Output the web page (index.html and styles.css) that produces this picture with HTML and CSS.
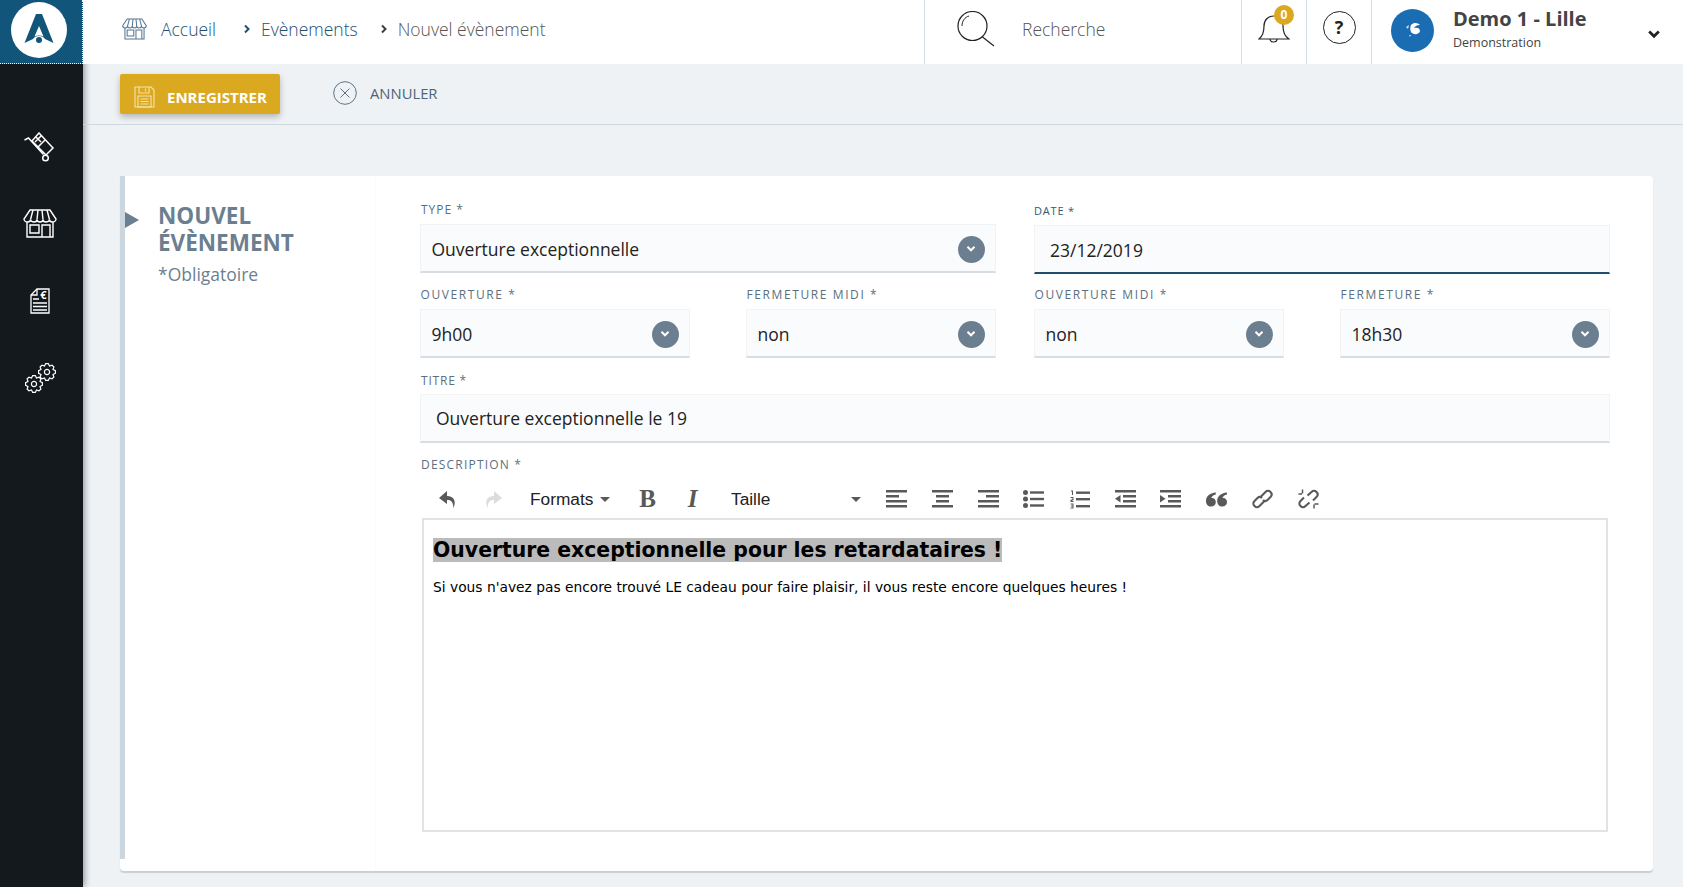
FILE: index.html
```html
<!DOCTYPE html>
<html lang="fr">
<head>
    <meta charset="UTF-8">
    <title>Nouvel évènement</title>
    <link rel="stylesheet" href="styles.css">
</head>
<body>
    <svg class="defs" width="0" height="0">
        <symbol id="store" viewBox="0 0 34 29">
            <path d="M7 1H27L33 10C33 12 31 13 29.500 13C28 13 26.500 12 26.500 10.500C26.500 12 24.500 13 23 13C21.500 13 20 12 20 10.500C20 12 18.500 13 17 13C15.500 13 14 12 14 10.500C14 12 12.500 13 11 13C9.500 13 7.500 12 7.500 10.500C7.500 12 6 13 4.500 13C3 13 1 12 1 10Z" fill="none" stroke="currentColor" stroke-width="1.400"/>
            <path d="M7.500 10.500L10 1M14 10.500L15 1M20 10.500L19 1M26.500 10.500L24 1" fill="none" stroke="currentColor" stroke-width="1.400"/>
            <path d="M4 13V28H30V13M7 16H16V24H7ZM19 28V16H27V28" fill="none" stroke="currentColor" stroke-width="1.400"/>
        </symbol>
        <symbol id="gear" viewBox="-9 -9 18 18">
            <polygon points="8.4,1.33 6,2.49 6.88,5 5,6.88 2.49,6 1.33,8.4 -1.33,8.4 -2.49,6 -5,6.88 -6.88,5 -6,2.49 -8.4,1.33 -8.4,-1.33 -6,-2.49 -6.88,-5 -5,-6.88 -2.49,-6 -1.33,-8.4 1.33,-8.4 2.49,-6 5,-6.88 6.88,-5 6,-2.49 8.4,-1.33" fill="none" stroke="currentColor" stroke-width="1.200"/>
            <circle r="2.600" fill="none" stroke="currentColor" stroke-width="1.200"/>
        </symbol>
        <symbol id="chevron" viewBox="0 0 10 8">
            <path d="M1.500 1.800L5 5.300L8.500 1.800" fill="none" stroke="currentColor" stroke-width="2"/>
        </symbol>
    </svg>

    <div class="app">
        <aside class="sidebar">
            <div class="logo">
                <svg width="56" height="56" viewBox="0 0 56 56">
                    <circle cx="28" cy="28" r="28" fill="#fff"/>
                    <path d="M25 12H31L42.500 41L34 37C32 33 24 33 22 37L13.500 41Z" fill="#11557a"/>
                    <path d="M28 24L32.500 34.500C30 33 26 33 23.500 34.500Z" fill="#fff"/>
                    <circle cx="28" cy="38" r="3" fill="#11557a"/>
                </svg>
            </div>
            <nav class="side-nav">
                <a class="side-item">
                    <svg width="32" height="30" viewBox="0 0 32 30" fill="none" stroke="#fff" stroke-width="1.500">
                        <path d="M0.500 8L4.500 6L19.500 22.500"/>
                        <path d="M15 1L29 16L22 23L8 9Z"/>
                        <path d="M12 5L17 10M17.500 3.500L11 10M21 8L14 15"/>
                        <circle cx="21.500" cy="26" r="2.800"/>
                    </svg>
                </a>
                <a class="side-item">
                    <svg class="store-side" width="34" height="29"><use href="#store"/></svg>
                </a>
                <a class="side-item">
                    <svg width="20" height="26" viewBox="0 0 20 26" fill="none" stroke="#fff" stroke-width="1.300">
                        <path d="M7 1H19V25H1V7Z"/>
                        <path d="M7 1V7H1"/>
                        <path d="M3 11H9M3 15H17M3 18.500H17M3 22H17"/>
                        <text class="euro" x="13.500" y="11" text-anchor="middle">€</text>
                    </svg>
                </a>
                <a class="side-item">
                    <span class="gears">
                        <svg class="gear-top" width="18" height="18"><use href="#gear"/></svg>
                        <svg class="gear-bottom" width="18" height="18"><use href="#gear"/></svg>
                    </span>
                </a>
            </nav>
        </aside>

        <div class="main">
            <header class="topbar">
                <div class="crumbs">
                    <svg class="crumb-store" width="25" height="22"><use href="#store"/></svg>
                    <a class="crumb crumb-home">Accueil</a>
                    <svg class="crumb-sep" width="8" height="10" viewBox="0 0 8 10"><path d="M2 1.500L5.500 5L2 8.500" fill="none" stroke="#24506f" stroke-width="2"/></svg>
                    <a class="crumb">Evènements</a>
                    <svg class="crumb-sep crumb-sep-last" width="8" height="10" viewBox="0 0 8 10"><path d="M2 1.500L5.500 5L2 8.500" fill="none" stroke="#3a3f44" stroke-width="2"/></svg>
                    <span class="crumb crumb-current">Nouvel évènement</span>
                </div>
                <div class="search">
                    <svg width="38" height="36" viewBox="0 0 38 36" fill="none" stroke="#222" stroke-width="1.200">
                        <circle cx="15.500" cy="15" r="14.500"/>
                        <path d="M25.500 26L37 35"/>
                        <path d="M5 15C5 10 8 6 12 5" stroke-width="1"/>
                    </svg>
                    <span class="search-text">Recherche</span>
                </div>
                <div class="top-icon top-bell">
                    <svg width="32" height="30" viewBox="0 0 32 30" fill="none" stroke="#222" stroke-width="1.200">
                        <path d="M1 25C5 22 6 18 6 12C6 6 10 2 16 2C22 2 25 6 25 12C25 18 26 22 31 25Z"/>
                        <path d="M12 25C12 29 19 29 19 25"/>
                    </svg>
                    <span class="badge">0</span>
                </div>
                <div class="top-icon">
                    <span class="help">?</span>
                </div>
                <div class="account">
                    <span class="avatar">
                        <svg width="20" height="20" viewBox="0 0 20 20">
                            <path d="M8 5C11 2 15 3 17 5C14 5 12 6 11 8C14 7 17 8 17 11C16 15 10 15 8 12C7 10 7 7 8 5Z" fill="#fff"/>
                            <path d="M3 7L6 5L5 9ZM6 15L8 15L7 17Z" fill="#cfe0ef"/>
                        </svg>
                    </span>
                    <div class="account-text">
                        <div class="account-name">Demo 1 - Lille</div>
                        <div class="account-sub">Demonstration</div>
                    </div>
                    <svg class="account-chevron" width="14" height="11"><use href="#chevron"/></svg>
                </div>
            </header>

            <div class="actions">
                <button class="btn-save">
                    <svg width="21" height="22" viewBox="0 0 21 22" fill="none" stroke="#f6e4ad" stroke-width="1.100">
                        <path d="M1 1H17L20 4V21H1Z"/>
                        <path d="M5 1V7H15V1M11.500 2.500V5.500"/>
                        <path d="M4 10H17V21H4ZM6.500 13H14.500M6.500 15.500H14.500M6.500 18H14.500"/>
                    </svg>
                    ENREGISTRER
                </button>
                <a class="btn-cancel">
                    <svg width="24" height="24" viewBox="0 0 24 24" fill="none" stroke="#5d7385" stroke-width="1">
                        <circle cx="12" cy="12" r="11.300"/>
                        <path d="M7.500 7.500L16.500 16.500M16.500 7.500L7.500 16.500"/>
                    </svg>
                    ANNULER
                </a>
            </div>

            <section class="card">
                <div class="card-side">
                    <h2>NOUVEL<br>ÉVÈNEMENT</h2>
                    <p>*Obligatoire</p>
                </div>
                <form class="card-form">
                    <div class="form-row">
                        <div class="field">
                            <label>TYPE *</label>
                            <div class="control">Ouverture exceptionnelle<span class="arrow"><svg width="10" height="8"><use href="#chevron"/></svg></span></div>
                        </div>
                        <div class="field field-date">
                            <label>DATE *</label>
                            <div class="control control-text control-active">23/12/2019</div>
                        </div>
                    </div>
                    <div class="form-row form-row-hours">
                        <div class="pair pair-left">
                            <div class="field">
                                <label>OUVERTURE *</label>
                                <div class="control">9h00<span class="arrow"><svg width="10" height="8"><use href="#chevron"/></svg></span></div>
                            </div>
                            <div class="field">
                                <label>FERMETURE MIDI *</label>
                                <div class="control">non<span class="arrow"><svg width="10" height="8"><use href="#chevron"/></svg></span></div>
                            </div>
                        </div>
                        <div class="pair pair-right">
                            <div class="field">
                                <label>OUVERTURE MIDI *</label>
                                <div class="control">non<span class="arrow"><svg width="10" height="8"><use href="#chevron"/></svg></span></div>
                            </div>
                            <div class="field">
                                <label>FERMETURE *</label>
                                <div class="control">18h30<span class="arrow"><svg width="10" height="8"><use href="#chevron"/></svg></span></div>
                            </div>
                        </div>
                    </div>
                    <div class="field field-title">
                        <label>TITRE *</label>
                        <div class="control control-text">Ouverture exceptionnelle le 19</div>
                    </div>
                    <div class="field field-desc">
                        <label>DESCRIPTION *</label>
                        <div class="editor-tools">
                            <span class="tool">
                                <svg width="20" height="20" viewBox="0 0 20 20"><path d="M9 2L1 9L9 15V11C13 11 15 12.500 15.500 19C18.500 12 16 7 9 7Z" fill="#595959"/></svg>
                            </span>
                            <span class="tool">
                                <svg width="20" height="20" viewBox="0 0 20 20"><path d="M11 2L19 9L11 15V11C7 11 5 12.500 4.500 19C1.500 12 4 7 11 7Z" fill="#dcdcdc"/></svg>
                            </span>
                            <span class="tool-menu tool-formats">Formats<i class="caret"></i></span>
                            <span class="tool tool-letter tool-b">B</span>
                            <span class="tool tool-letter tool-i">I</span>
                            <span class="tool-menu tool-size">Taille<i class="caret"></i></span>
                            <span class="tool tool-icon">
                                <svg width="21" height="18" viewBox="0 0 21 18" fill="#595959"><rect width="21" height="2.500"/><rect y="5" width="13" height="2.500"/><rect y="10" width="21" height="2.500"/><rect y="15" width="21" height="2.500"/></svg>
                            </span>
                            <span class="tool tool-icon">
                                <svg width="21" height="18" viewBox="0 0 21 18" fill="#595959"><rect width="21" height="2.500"/><rect x="4" y="5" width="13" height="2.500"/><rect x="4" y="10" width="13" height="2.500"/><rect y="15" width="21" height="2.500"/></svg>
                            </span>
                            <span class="tool tool-icon">
                                <svg width="21" height="18" viewBox="0 0 21 18" fill="#595959"><rect width="21" height="2.500"/><rect x="8" y="5" width="13" height="2.500"/><rect y="10" width="21" height="2.500"/><rect y="15" width="21" height="2.500"/></svg>
                            </span>
                            <span class="tool tool-icon">
                                <svg width="21" height="18" viewBox="0 0 21 18" fill="#595959"><circle cx="2.500" cy="2.500" r="2.500"/><circle cx="2.500" cy="9" r="2.500"/><circle cx="2.500" cy="15.500" r="2.500"/><rect x="7" y="1.300" width="14" height="2.400"/><rect x="7" y="7.800" width="14" height="2.400"/><rect x="7" y="14.300" width="14" height="2.400"/></svg>
                            </span>
                            <span class="tool tool-icon">
                                <svg width="20" height="19" viewBox="0 0 20 19" fill="#595959"><path d="M1 0.500H3V5H2V1.500H1ZM0.500 7H3.500V10L1.500 11H3.500V12H0.500V10L2.500 9V8H0.500ZM0.500 13.500H3.500V18.500H0.500V17.500H2.500V16.500H1V15.500H2.500V14.500H0.500Z"/><rect x="6" y="1.500" width="14" height="2.400"/><rect x="6" y="8" width="14" height="2.400"/><rect x="6" y="15" width="14" height="2.400"/></svg>
                            </span>
                            <span class="tool tool-icon">
                                <svg width="21" height="18" viewBox="0 0 21 18" fill="#595959"><rect width="21" height="2.500"/><rect x="8" y="5" width="13" height="2.500"/><rect x="8" y="10" width="13" height="2.500"/><rect y="15" width="21" height="2.500"/><path d="M5.500 5V12.500L0 8.800Z"/></svg>
                            </span>
                            <span class="tool tool-icon">
                                <svg width="21" height="18" viewBox="0 0 21 18" fill="#595959"><rect width="21" height="2.500"/><rect x="8" y="5" width="13" height="2.500"/><rect x="8" y="10" width="13" height="2.500"/><rect y="15" width="21" height="2.500"/><path d="M0 5V12.500L5.500 8.800Z"/></svg>
                            </span>
                            <span class="tool tool-icon">
                                <svg width="21" height="15" viewBox="0 0 21 15" fill="#595959"><path d="M9.800 0.500V2.500C7 3 5.800 4.500 5.300 6C8 5.500 9.800 7.500 9.800 10C9.800 12.800 7.800 14.500 5 14.500C2 14.500 0 12.500 0 9C0 4.500 3.500 1 9.800 0.500Z"/><path d="M21 0.500V2.500C18.200 3 17 4.500 16.500 6C19.200 5.500 21 7.500 21 10C21 12.800 19 14.500 16.200 14.500C13.200 14.500 11.200 12.500 11.200 9C11.200 4.500 14.700 1 21 0.500Z"/></svg>
                            </span>
                            <span class="tool tool-icon">
                                <svg width="21" height="20" viewBox="0 0 21 20" fill="none" stroke="#595959" stroke-width="2.100"><path d="M8.500 8L13.500 3C15 1.500 17 1.500 18.500 3C20 4.500 20 6.500 18.500 8L15.500 11C14 12.500 12.500 12.500 11 11"/><path d="M12.500 12L7.500 17C6 18.500 4 18.500 2.500 17C1 15.500 1 13.500 2.500 12L5.500 9C7 7.500 8.500 7.500 10 9"/></svg>
                            </span>
                            <span class="tool tool-icon">
                                <svg width="21" height="20" viewBox="0 0 21 20" fill="none" stroke="#595959" stroke-width="2.100"><path d="M9.500 6.500L13.500 3C15 1.500 17 1.500 18.500 3C20 4.500 20 6.500 18.500 8L15 11.500"/><path d="M11.500 13.500L7.500 17C6 18.500 4 18.500 2.500 17C1 15.500 1 13.500 2.500 12L6 8.500"/><path d="M4.500 0.500V4.500M0.500 5H4M16.500 15H20.500M16 19.500V15.500" stroke-width="1.500"/></svg>
                            </span>
                        </div>
                        <div class="editor">
                            <h1><span class="picked">Ouverture exceptionnelle pour les retardataires !</span></h1>
                            <p>Si vous n'avez pas encore trouvé LE cadeau pour faire plaisir, il vous reste encore quelques heures !</p>
                        </div>
                    </div>
                </form>
            </section>
        </div>
    </div>
</body>
</html>
```

FILE: styles.css
```css
*{
    box-sizing: border-box;
}
html, body{
    margin: 0;
    height: 100%;
    overflow: hidden;
}
body{
    font-family: "Open Sans", sans-serif;
    background-color: #eef2f5;
    color: #222;
}
.defs{
    display: block;
    height: 0;
}
.app{
    display: flex;
    height: 887px;
}

/* sidebar */
.sidebar{
    width: 83px;
    flex: none;
    background-color: #14191d;
    box-shadow: 2px 0 6px rgba(0, 0, 0, 0.35);
    color: #fff;
}
.logo{
    height: 64px;
    background-color: #11557a;
    border-right: 1px dotted #fff;
    border-bottom: 1px dotted #fff;
    padding: 2px 0 0 11px;
}
.side-nav{
    padding: 44px 3px 0 0;
}
.side-item{
    height: 77px;
    display: flex;
    align-items: center;
    justify-content: center;
}
.euro{
    font-family: "Open Sans", sans-serif;
    font-size: 11px;
    font-weight: 700;
    fill: #fff;
    stroke: none;
}
.gears{
    position: relative;
    display: block;
    width: 31px;
    height: 30px;
}
.gear-top{
    position: absolute;
    right: 0;
    top: 0;
}
.gear-bottom{
    position: absolute;
    left: 0;
    bottom: 0;
}

/* header */
.main{
    flex: 1;
    min-width: 0;
}
.topbar{
    height: 64px;
    display: flex;
    background-color: #fff;
}
.crumbs{
    flex: 1;
    display: flex;
    align-items: center;
    padding: 0 0 6px 39px;
    font-size: 17.5px;
    font-weight: 300;
}
.crumb-store{
    color: #55768f;
    margin-right: 14px;
}
.crumb{
    color: #24506f;
}
.crumb-sep{
    margin: 0 10px 0 27px;
}
.crumb-sep-last{
    margin: 0 10px 0 22px;
}
.crumb-current{
    color: #555;
}
.search{
    width: 317px;
    flex: none;
    display: flex;
    align-items: center;
    padding: 0 0 7px 32px;
    border-left: 1px solid #d5dde4;
}
.search-text{
    margin-left: 27px;
    font-size: 17.5px;
    font-weight: 300;
    color: #555;
}
.top-icon{
    position: relative;
    width: 65px;
    flex: none;
    display: flex;
    align-items: center;
    justify-content: center;
    padding-bottom: 8px;
    border-left: 1px solid #d5dde4;
}
.top-bell{
    padding-bottom: 6px;
}
.badge{
    position: absolute;
    left: 32px;
    top: 5px;
    width: 20px;
    height: 20px;
    border-radius: 50%;
    background-color: #dba920;
    color: #fff;
    font-size: 12px;
    font-weight: 700;
    line-height: 20px;
    text-align: center;
}
.help{
    width: 33px;
    height: 33px;
    margin-bottom: 2px;
    border: 1.500px solid #222;
    border-radius: 50%;
    text-align: center;
    font-size: 18px;
    font-weight: 700;
    line-height: 30px;
}
.account{
    width: 312px;
    flex: none;
    display: flex;
    align-items: center;
    padding: 0 0 4px 19px;
    border-left: 1px solid #d5dde4;
}
.avatar{
    width: 43px;
    height: 43px;
    margin-right: 19px;
    border-radius: 50%;
    background-color: #1a6db3;
    display: flex;
    align-items: center;
    justify-content: center;
}
.account-text{
    margin-top: -3px;
}
.account-name{
    font-size: 20px;
    font-weight: 700;
    line-height: 26px;
    color: #444;
}
.account-sub{
    font-size: 12.5px;
    line-height: 18px;
    margin-top: 2px;
    color: #444;
}
.account-chevron{
    margin: 9px 22px 0 auto;
    color: #222;
}

/* actions */
.actions{
    height: 61px;
    display: flex;
    align-items: flex-start;
    padding: 10px 0 0 37px;
    border-bottom: 1px solid #cfd8df;
}
.btn-save{
    width: 160px;
    height: 40px;
    display: flex;
    align-items: center;
    gap: 12px;
    padding: 5px 0 0 14px;
    border: 0;
    border-radius: 2px;
    background-color: #dba920;
    color: #fff;
    font-family: inherit;
    font-size: 15px;
    font-weight: 700;
    box-shadow: 0 3px 6px rgba(0, 0, 0, 0.25);
}
.btn-cancel{
    display: flex;
    align-items: center;
    gap: 13px;
    height: 38px;
    margin-left: 53px;
    font-size: 14.8px;
    color: #4f6577;
}

/* card */
.card{
    display: flex;
    height: 695px;
    margin: 51px 30px 0 37px;
    background-color: #fff;
    border-radius: 4px;
    box-shadow: 0 2px 1px #cbcfd2;
}
.card-side{
    position: relative;
    width: 256px;
    flex: none;
    height: 683px;
    margin-right: 44px;
    padding: 26px 0 0 33px;
    border-left: 5px solid #ccd6de;
    color: #6b7f90;
}
.card-side::before{
    content: "";
    position: absolute;
    left: 0;
    top: 36px;
    border-left: 14px solid #6b7f90;
    border-top: 8px solid transparent;
    border-bottom: 8px solid transparent;
}
.card-side::after{
    content: "";
    position: absolute;
    right: 0;
    top: 0;
    height: 695px;
    border-right: 1px solid #fafbfc;
}
.card-side h2{
    margin: 0;
    font-size: 22.5px;
    font-weight: 700;
    line-height: 27px;
}
.card-side p{
    margin: 5px 0 0;
    font-size: 17.500px;
    line-height: 26px;
}
.card-form{
    width: 1190px;
    padding-top: 26px;
}
.form-row{
    display: grid;
    grid-template-columns: 1fr 1fr;
    column-gap: 38px;
    margin-bottom: 14px;
}
.pair{
    display: grid;
    column-gap: 56px;
}
.pair-left{
    grid-template-columns: 270px 250px;
}
.pair-right{
    grid-template-columns: 250px 270px;
}
.field label{
    display: block;
    height: 15px;
    margin-bottom: 7px;
    padding-left: 1px;
    font-size: 12px;
    line-height: 15px;
    letter-spacing: 1px;
    color: #5b6f80;
}
.form-row-hours label{
    padding-left: 0.5px;
    letter-spacing: 1.6px;
}
.field-date label{
    padding: 1px 0 0;
    margin-bottom: 8px;
    font-size: 11px;
    letter-spacing: 0.8px;
    color: #2f5a79;
}
.control{
    position: relative;
    height: 49px;
    display: flex;
    align-items: center;
    padding: 2px 0 0 10.5px;
    background-color: #fafbfd;
    border: 1px solid #f1f3f5;
    border-bottom: 2px solid #d7dde2;
    font-size: 17.5px;
    color: #222;
}
.control-text{
    padding-left: 15px;
}
.control-active{
    margin-bottom: -1px;
    border-bottom-color: #1f4e6e;
}
.arrow{
    position: absolute;
    right: 10.5px;
    top: 10.5px;
    width: 27px;
    height: 27px;
    border-radius: 50%;
    background-color: #6b7f90;
    color: #fff;
    display: flex;
    align-items: center;
    justify-content: center;
}
.field-title{
    padding-top: 1px;
}
.field-title label{
    margin-bottom: 6px;
    letter-spacing: 0.8px;
}
.field-title .control{
    height: 49px;
    padding-top: 0;
}
.field-desc{
    margin-top: 14px;
}
.field-desc label{
    margin-bottom: 8px;
    letter-spacing: 1.2px;
}

/* editor */
.editor-tools{
    height: 38px;
    display: flex;
    align-items: center;
    padding-left: 5px;
    font-family: "Liberation Sans", sans-serif;
    font-size: 17.3px;
    color: #222;
}
.tool{
    width: 45px;
    flex: none;
    display: flex;
    justify-content: center;
}
.tool-icon{
    width: 45.700px;
}
.tool-letter{
    font-family: "Liberation Serif", serif;
    font-size: 25px;
    line-height: 28px;
    font-weight: 700;
    color: #595959;
}
.tool-i{
    font-style: italic;
}
.tool-menu{
    flex: none;
    display: flex;
    align-items: center;
    padding-left: 15px;
}
.tool-formats{
    width: 110px;
}
.tool-size{
    width: 159px;
    padding-left: 16px;
}
.caret{
    margin-left: 7px;
    border-top: 5px solid #595959;
    border-left: 5px solid transparent;
    border-right: 5px solid transparent;
}
.tool-size .caret{
    margin-left: auto;
    margin-right: 13px;
}
.editor{
    height: 314px;
    margin: 0 2px;
    padding: 18px 9px;
    border: 2px solid #e3e3e3;
    font-family: "DejaVu Sans", sans-serif;
    color: #000;
}
.editor h1{
    margin: 0;
    font-size: 20.4px;
    line-height: 25px;
}
.picked{
    background-color: #bbb;
}
.editor p{
    margin: 15px 0 0;
    font-size: 13.8px;
    line-height: 18px;
}
```
